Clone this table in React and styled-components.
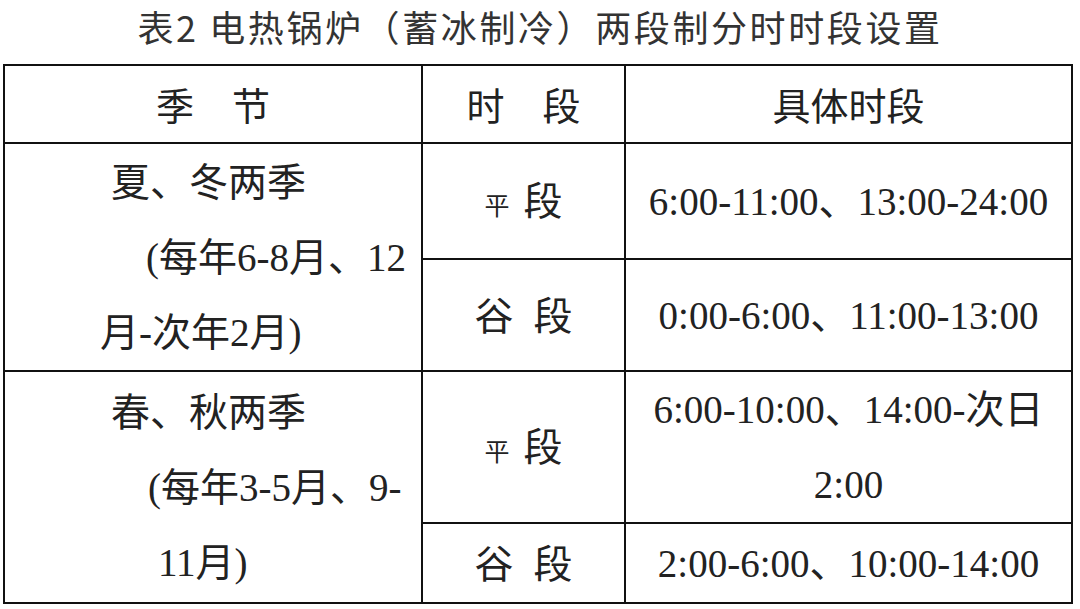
import React from "react";
import styled, { createGlobalStyle } from "styled-components";

const GlobalStyle = createGlobalStyle`
  html, body {
    margin: 0;
    padding: 0;
    background: #ffffff;
  }
  body {
    font-family: "Liberation Serif", "Noto Sans CJK SC", serif;
    color: #222222;
  }
`;

const Page = styled.div`
  width: 1080px;
  height: 609px;
  overflow: hidden;
  display: flex;
  flex-direction: column;
`;

const Title = styled.div`
  height: 52px;
  display: flex;
  align-items: center;
  justify-content: center;
  font-family: "Noto Sans CJK SC", sans-serif;
  font-size: 36px;
  letter-spacing: 2.6px;
  color: #333333;
  line-height: 1;
`;

const TableWrap = styled.div`
  padding: 12px 0 0 3px;
`;

const Table = styled.table`
  width: 1068px;
  table-layout: fixed;
  border-collapse: collapse;
  border: 2px solid #111111;
`;

const Col = styled.col`
  width: ${(p) => p.w}px;
`;

const Cell = styled.td`
  border: 2px solid #111111;
  padding: 0;
  height: ${(p) => p.h}px;
  text-align: ${(p) => (p.left ? "left" : "center")};
  vertical-align: middle;
  font-size: 39px;
  line-height: 75px;
  white-space: nowrap;
`;

const HeadCell = styled(Cell)`
  font-family: "Noto Sans CJK SC", sans-serif;
  font-size: 38px;
  line-height: 1;
`;

const Line = styled.div`
  padding-left: ${(p) => p.indent}px;
  line-height: 75px;
`;

const Small = styled.span`
  font-size: 25px;
  font-family: "Noto Sans CJK SC", sans-serif;
  vertical-align: 0;
  margin-right: 14px;
`;

const Label = styled.span`
  font-family: "Noto Sans CJK SC", sans-serif;
`;

const Gap = styled.span`
  display: inline-block;
  width: ${(p) => p.w}px;
`;

const seasons = [
  {
    lines: [
      { text: "夏、冬两季", indent: 106 },
      { text: "(每年6-8月、12", indent: 141 },
      { text: "月-次年2月)", indent: 95 },
    ],
    flat: { h: 114, times: ["6:00-11:00、13:00-24:00"] },
    valley: { h: 110, times: ["0:00-6:00、11:00-13:00"] },
  },
  {
    lines: [
      { text: "春、秋两季", indent: 106 },
      { text: "(每年3-5月、9-", indent: 143 },
      { text: "11月)", indent: 153 },
    ],
    flat: { h: 150, times: ["6:00-10:00、14:00-次日", "2:00"] },
    valley: { h: 76, times: ["2:00-6:00、10:00-14:00"] },
  },
];

const Times = ({ times }) => (
  <>
    {times.map((t, i) => (
      <div key={i}>{t}</div>
    ))}
  </>
);

export default function App() {
  return (
    <Page>
      <GlobalStyle />
      <Title>表2 电热锅炉（蓄冰制冷）两段制分时时段设置</Title>
      <TableWrap>
        <Table>
          <colgroup>
            <Col w={418} />
            <Col w={203} />
            <Col w={447} />
          </colgroup>
          <tbody>
            <tr>
              <HeadCell h={76}>季　节</HeadCell>
              <HeadCell h={76}>时　段</HeadCell>
              <HeadCell h={76}>具体时段</HeadCell>
            </tr>
            {seasons.map((s, i) => (
              <React.Fragment key={i}>
                <tr>
                  <Cell rowSpan={2} left h={s.flat.h}>
                    {s.lines.map((l, j) => (
                      <Line key={j} indent={l.indent}>
                        {l.text}
                      </Line>
                    ))}
                  </Cell>
                  <Cell h={s.flat.h}>
                    <Small>平</Small>
                    <Label>段</Label>
                  </Cell>
                  <Cell h={s.flat.h}>
                    <Times times={s.flat.times} />
                  </Cell>
                </tr>
                <tr>
                  <Cell h={s.valley.h}>
                    <Label>谷</Label>
                    <Gap w={20} />
                    <Label>段</Label>
                  </Cell>
                  <Cell h={s.valley.h}>
                    <Times times={s.valley.times} />
                  </Cell>
                </tr>
              </React.Fragment>
            ))}
          </tbody>
        </Table>
      </TableWrap>
    </Page>
  );
}
